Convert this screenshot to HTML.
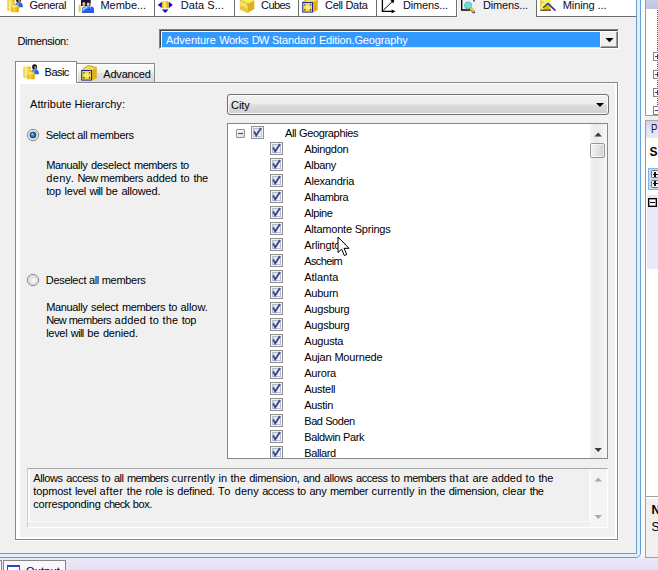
<!DOCTYPE html>
<html><head><meta charset="utf-8"><title>Dimension Data</title>
<style>
*{margin:0;padding:0;box-sizing:border-box}
html,body{width:658px;height:570px;overflow:hidden;background:#f0f0f0}
body{position:relative;font-family:"Liberation Sans",sans-serif;font-size:11px;color:#000;line-height:13px}
.a{position:absolute}
.t{position:absolute;white-space:nowrap;height:13px;line-height:13px}
.tab{position:absolute;top:0;height:17px;background:#fff;border-right:1px solid #6d6d6d;border-bottom:1px solid #6d6d6d}
.cb{position:absolute;width:13px;height:13px;border:1px solid #8e8f8f;background:#f4f4f4}
.cb i{position:absolute;left:1px;top:1px;width:9px;height:9px;border:1px solid #b8c0cc;background:linear-gradient(135deg,#d6dae0,#f6f6f6)}
.cb svg{position:absolute;left:0;top:0}
</style></head>
<body>
<div class="a" style="left:-10px;top:-10px;width:651px;height:568px;border:1px solid #669fd3;border-radius:0 0 5px 0;background:#e4eefa"></div>
<div class="a" style="left:-10px;top:-10px;width:647px;height:564px;border:1px solid #669fd3;background:#f0f0f0"></div>
<div class="a" style="left:641px;top:0;width:4px;height:556px;background:#fbfaf6"></div>
<div class="a" style="left:0;top:558px;width:658px;height:12px;background:linear-gradient(#e9e9f8,#e2e2f4)"></div>
<div class="a" style="left:0;top:0;width:636px;height:17px;background:#f0f0f0"></div>
<div class="tab" style="left:0px;width:75px"></div>
<div class="a" style="left:0px;top:0;width:75px;height:16px;overflow:hidden"><svg class="a" style="left:7px;top:-3px;overflow:visible" width="16" height="16" viewBox="0 0 16 16"><defs><linearGradient id="cy0" x1="0" x2="1"><stop offset="0" stop-color="#e9b80c"/><stop offset=".35" stop-color="#fff27a"/><stop offset="1" stop-color="#d9a300"/></linearGradient></defs><rect x="0.4" y="2.6" width="7.4" height="11.3" rx="1.5" fill="url(#cy0)"/><path d="M0.6 5.5h7M0.6 8h7M0.6 10.5h7" stroke="#fff8b0" stroke-width=".7" opacity=".7"/><ellipse cx="11.6" cy="3" rx="2.5" ry="2.7" fill="#15102e"/><ellipse cx="12.3" cy="3.6" rx="1.1" ry="1.5" fill="#b8a030"/><path d="M10.6 5 h2.6 v.8 h-2.6z" fill="#c8b040"/><path d="M7.8 10.3 q0 -5 4 -5 q4.2 0 4.2 5z" fill="#2a62ea"/><path d="M9.6 8.8 q.6 -2.4 2.6 -2.4" stroke="#8fd0ff" stroke-width="1" fill="none"/><rect x="4.2" y="7.8" width="7.6" height="7.4" rx="1.5" fill="url(#cy0)"/><rect x="4.2" y="10.5" width="7.6" height="4.7" rx="1.5" fill="#f0a000" opacity=".45"/><path d="M4.4 9.6h7.2" stroke="#fff8b0" stroke-width=".7" opacity=".8"/></svg></div>
<div class="t" style="letter-spacing:-0.377px;left:29.5px;top:-1px;color:#0a0a1e">General</div>
<div class="tab" style="left:75px;width:80px"></div>
<div class="a" style="left:75px;top:0;width:80px;height:16px;overflow:hidden"><svg class="a" style="left:3px;top:-3.2px;overflow:visible" width="16" height="16" viewBox="0 0 16 16"><ellipse cx="1.7" cy="11.4" rx="1.2" ry="4.2" fill="#d8c828" opacity=".85"/><path d="M3 9 V4.4 q0 -3.4 2.8 -3.4 q1.5 0 2.4 1 q1 -1 2.5 -.6 q2.4 .6 2 3.8 l-.5 3.8z" fill="#1a1030"/><ellipse cx="5.8" cy="7" rx="1.5" ry="1.9" fill="#e8b890"/><ellipse cx="10.2" cy="7.3" rx="1.4" ry="1.7" fill="#f0c8a0"/><path d="M4 16 v-3.4 q0 -3 3 -3 h6 q3 0 3 3.2 v3.2z" fill="#2c5ce4"/><path d="M5.2 13.6 q.4 -2.8 3 -2.8 h1.2" stroke="#9fe0f0" stroke-width="1.5" fill="none"/><path d="M11 10 l1.3 2.2 l1.1 -2.2" fill="#7a8cf0"/></svg></div>
<div class="t" style="letter-spacing:-0.045px;left:100.5px;top:-1px;color:#0a0a1e">Membe...</div>
<div class="tab" style="left:155px;width:80px"></div>
<div class="a" style="left:155px;top:0;width:80px;height:16px;overflow:hidden"><svg class="a" style="left:2px;top:-3px;overflow:visible" width="16" height="16" viewBox="0 0 16 16"><defs><linearGradient id="ds2" x1="0" x2="1"><stop offset="0" stop-color="#e0a800"/><stop offset=".4" stop-color="#fff080"/><stop offset="1" stop-color="#d89c00"/></linearGradient></defs><rect x="4.9" y="4" width="6.8" height="7.6" rx="1.6" fill="url(#ds2)"/><path d="M0.8 7.9 l4 -3.2 v6.4z M15.9 7.9 l-4 -3.2 v6.4z M8.2 15.9 l-3.4 -3.4 h6.8z M8.2 0 l-3 3 h6z" fill="#0a0ae6"/></svg></div>
<div class="t" style="letter-spacing:0.050px;left:180.75px;top:-1px;color:#0a0a1e">Data S...</div>
<div class="tab" style="left:235px;width:64px"></div>
<div class="a" style="left:235px;top:0;width:64px;height:16px;overflow:hidden"><svg class="a" style="left:3.5px;top:-3.2px;overflow:visible" width="16" height="16" viewBox="0 0 16 16"><path d="M0.8 3.2 L8.4 0 L15.3 3.2 L8.6 6.7z" fill="#f6ee5a"/><path d="M0.8 3.2 L8.6 6.7 V16 L0.8 12.4z" fill="#f3e16c"/><path d="M0.8 8 L8.6 11.5 V16 L0.8 12.4z" fill="#e9bf2a" opacity=".8"/><path d="M8.6 6.7 L15.3 3.2 V12 L8.6 16z" fill="#ddb01c"/><path d="M0.8 3.2 L8.6 6.7 L8.6 9" stroke="#c89a10" stroke-width=".7" fill="none"/></svg></div>
<div class="t" style="letter-spacing:-0.559px;left:261px;top:-1px;color:#0a0a1e">Cubes</div>
<div class="tab" style="left:299px;width:78px"></div>
<div class="a" style="left:299px;top:0;width:78px;height:16px;overflow:hidden"><svg class="a" style="left:2.8000000000000114px;top:-3.1px;overflow:visible" width="16" height="16" viewBox="0 0 16 16"><path d="M0.6 5 L7 0.2 L15.8 2.6 L11 5z" fill="#f3dc50"/><path d="M1 5 L7 0.4 L15.6 2.6" stroke="#c88a10" stroke-width=".8" fill="none"/><path d="M11 5 L15.8 2.6 V13 L11 15.4z" fill="#ddb01c"/><rect x="0.7" y="5.5" width="9.8" height="9.6" fill="#f4dc3c" stroke="#1c2a90" stroke-width="1"/><path d="M2.6 7.6 l6 5.6 M8.6 7.6 l-6 5.6" stroke="#f8f0a0" stroke-width="1.2"/><path d="M2.2 7.2h1.4v1.4h-1.4z M7.8 7.2h1.4v1.4h-1.4z M2.2 12h1.4v1.4h-1.4z M7.8 12h1.4v1.4h-1.4z" fill="#4a2a80"/></svg></div>
<div class="t" style="letter-spacing:-0.306px;left:325px;top:-1px;color:#0a0a1e">Cell Data</div>
<div class="tab" style="left:377px;width:80px"></div>
<div class="a" style="left:377px;top:0;width:80px;height:16px;overflow:hidden"><svg class="a" style="left:3px;top:0px;overflow:visible" width="16" height="16" viewBox="0 0 16 16"><path d="M2.4 -1 V11.3 H12" stroke="#000" stroke-width="1.3" fill="none"/><path d="M15.6 11.3 l-4 -1.9 v3.8z" fill="#000"/><path d="M3.4 10.2 L12.6 1.2" stroke="#000" stroke-width="1"/><path d="M14.4 -0.6 l-4 1 l3 3z" fill="#000"/></svg></div>
<div class="t" style="letter-spacing:-0.163px;left:403px;top:-1px;color:#0a0a1e">Dimens...</div>
<div class="a" style="left:457px;top:0;width:79px;height:17px;background:#f0f0f0;border-left:1px solid #fff"></div>
<div class="a" style="left:457px;top:0;width:79px;height:16px;overflow:hidden"><svg class="a" style="left:3px;top:0px;overflow:visible" width="16" height="16" viewBox="0 0 16 16"><path d="M1.7 -1 V10 H10" stroke="#000" stroke-width="1.3" fill="none"/><path d="M10.5 -0.5 l3.5 0 l0 2" stroke="#000" stroke-width="1.2" fill="none"/><circle cx="8.1" cy="5.5" r="3.6" fill="#38e6dc" stroke="#8aa0b0" stroke-width=".8"/><path d="M6.2 4.4h1v1h-1z M8.4 3.6h1v1h-1z M7.4 6.2h1v1h-1z M9.6 5.8h1v1h-1z" fill="#d8fffa"/><path d="M10.6 8.6 L13.8 12" stroke="#2a2460" stroke-width="2.6" stroke-linecap="round"/><path d="M10.5 8.2 L13.6 11.3" stroke="#e8d800" stroke-width="2.2" stroke-linecap="round"/></svg></div>
<div class="t" style="letter-spacing:-0.163px;left:483px;top:-1px;color:#0a0a1e">Dimens...</div>
<div class="tab" style="left:536px;width:100px;border-left:1px solid #6d6d6d;border-right:none"></div>
<div class="a" style="left:536px;top:0;width:100px;height:16px;overflow:hidden"><svg class="a" style="left:4px;top:0px;overflow:visible" width="16" height="16" viewBox="0 0 16 16"><rect x="0.4" y="-3" width="10.6" height="13.4" fill="#f8f27a"/><path d="M0.4 2.2h4 M0.9 -3v13" stroke="#d8b020" stroke-width=".8"/><path d="M2.6 10 L7.4 3.6 L11 10z" fill="#f2b000"/><path d="M0.4 10.2h10.6" stroke="#2a1a00" stroke-width="1"/><path d="M3.2 7.8 L7.8 3.2" stroke="#1e5a3a" stroke-width="1.4"/><path d="M7.6 3.2 L15.4 10.6" stroke="#2a3cb4" stroke-width="1.8"/></svg></div>
<div class="t" style="letter-spacing:-0.089px;left:562.75px;top:-1px;color:#0a0a1e">Mining ...</div>
<div class="t" id="dim" style="letter-spacing:-0.403px;left:17.5px;top:35px">Dimension:</div>
<div class="a" style="left:159px;top:29px;width:460px;height:20px;border:1px solid;border-color:#828282 #fff #fff #828282"></div>
<div class="a" style="left:160px;top:30px;width:458px;height:18px;border:1px solid;border-color:#404040 #e3e3e3 #e3e3e3 #404040;background:#fff"></div>
<div class="a" style="left:162px;top:32px;width:438px;height:15px;background:#3399ff"></div>
<div class="t" id="adv" style="left:166px;top:34px;color:#fff"><span style="position:absolute;left:0.00px;top:0;white-space:pre;letter-spacing:-0.040px">Adventure </span><span style="position:absolute;left:53.30px;top:0;white-space:pre;letter-spacing:-0.414px">Works </span><span style="position:absolute;left:85.70px;top:0;white-space:pre;letter-spacing:-0.700px">DW </span><span style="position:absolute;left:105.90px;top:0;white-space:pre;letter-spacing:-0.145px">Standard </span><span style="position:absolute;left:152.90px;top:0;white-space:pre;letter-spacing:-0.143px">Edition.Geography</span></div>
<div class="a" style="left:600px;top:31px;width:18px;height:17px;background:#f0f0f0;border:1px solid;border-color:#fff #696969 #696969 #fff;box-shadow:inset -1px -1px 0 #a0a0a0"></div>
<svg class="a" style="left:605px;top:38px" width="9" height="5" viewBox="0 0 9 5"><path d="M0.5 0h8L4.5 4.2z" fill="#000"/></svg>
<div class="a" style="left:15px;top:82px;width:604px;height:459px;border:1px solid #fff;border-left:none;border-top:none"></div>
<div class="a" style="left:15px;top:82px;width:603px;height:458px;border:1px solid #868686;background:#fff"></div>
<div class="a" style="left:20px;top:84px;width:595px;height:453px;background:#f0f0f0"></div>
<div class="a" style="left:76px;top:63px;width:79px;height:20px;border:1px solid #8c8c8c;border-bottom:1px solid #868686;background:linear-gradient(#fbfbfb,#f2f2f2 45%,#e2e2e2 55%,#dadada);box-shadow:inset 1px 1px 0 #fff"></div>
<div class="a" style="left:15px;top:61px;width:62px;height:21px;border:1px solid #868686;border-bottom:none;background:#fff"></div>
<div class="a" style="left:16px;top:82px;width:60px;height:2px;background:#fff"></div>
<svg class="a" style="left:23px;top:63.5px;overflow:visible" width="16" height="16" viewBox="0 0 16 16"><defs><linearGradient id="cy20" x1="0" x2="1"><stop offset="0" stop-color="#e9b80c"/><stop offset=".35" stop-color="#fff27a"/><stop offset="1" stop-color="#d9a300"/></linearGradient></defs><rect x="0.4" y="2.6" width="7.4" height="11.3" rx="1.5" fill="url(#cy20)"/><path d="M0.6 5.5h7M0.6 8h7M0.6 10.5h7" stroke="#fff8b0" stroke-width=".7" opacity=".7"/><ellipse cx="11.6" cy="3" rx="2.5" ry="2.7" fill="#15102e"/><ellipse cx="12.3" cy="3.6" rx="1.1" ry="1.5" fill="#b8a030"/><path d="M10.6 5 h2.6 v.8 h-2.6z" fill="#c8b040"/><path d="M7.8 10.3 q0 -5 4 -5 q4.2 0 4.2 5z" fill="#2a62ea"/><path d="M9.6 8.8 q.6 -2.4 2.6 -2.4" stroke="#8fd0ff" stroke-width="1" fill="none"/><rect x="4.2" y="7.8" width="7.6" height="7.4" rx="1.5" fill="url(#cy20)"/><rect x="4.2" y="10.5" width="7.6" height="4.7" rx="1.5" fill="#f0a000" opacity=".45"/><path d="M4.4 9.6h7.2" stroke="#fff8b0" stroke-width=".7" opacity=".8"/></svg>
<svg class="a" style="left:81px;top:65px;overflow:visible" width="16" height="16" viewBox="0 0 16 16"><path d="M0.6 5 L7 0.2 L15.8 2.6 L11 5z" fill="#f3dc50"/><path d="M1 5 L7 0.4 L15.6 2.6" stroke="#c88a10" stroke-width=".8" fill="none"/><path d="M11 5 L15.8 2.6 V13 L11 15.4z" fill="#ddb01c"/><rect x="0.7" y="5.5" width="9.8" height="9.6" fill="#f4dc3c" stroke="#1c2a90" stroke-width="1"/><path d="M2.6 7.6 l6 5.6 M8.6 7.6 l-6 5.6" stroke="#f8f0a0" stroke-width="1.2"/><path d="M2.2 7.2h1.4v1.4h-1.4z M7.8 7.2h1.4v1.4h-1.4z M2.2 12h1.4v1.4h-1.4z M7.8 12h1.4v1.4h-1.4z" fill="#4a2a80"/></svg>
<div class="t" style="letter-spacing:-0.541px;left:44.6px;top:66px">Basic</div>
<div class="t" style="letter-spacing:-0.180px;left:103.25px;top:68px">Advanced</div>
<div class="t" id="ah" style="letter-spacing:0.042px;left:30px;top:98px">Attribute Hierarchy:</div>
<div class="a" style="left:227px;top:94px;width:382px;height:21px;border:1px solid #707070;border-radius:3px;background:linear-gradient(#f2f2f2 0%,#ebebeb 48%,#dddddd 52%,#cfcfcf 100%);box-shadow:inset 0 0 0 1px #fafafa"></div>
<div class="t" style="letter-spacing:-0.051px;left:231px;top:99px">City</div>
<div class="a" style="left:595.5px;top:103px;width:0;height:0;border-left:4px solid transparent;border-right:4px solid transparent;border-top:4px solid #000"></div>
<svg class="a" style="left:26px;top:127.8px" width="14" height="14" viewBox="0 0 14 14"><circle cx="7" cy="7" r="5.7" fill="#f6f6f6" stroke="#8c8c8c" stroke-width="1"/><circle cx="7" cy="7" r="4.3" fill="#efefef" stroke="#c4c4c4" stroke-width=".8"/><circle cx="7" cy="7" r="3.3" fill="#1c4f8c"/><circle cx="6.8" cy="6.8" r="1.9" fill="#2f8fdc"/><circle cx="6.3" cy="6.2" r=".9" fill="#8fd4f8"/></svg>
<svg class="a" style="left:26px;top:272.8px" width="14" height="14" viewBox="0 0 14 14"><circle cx="7" cy="7" r="5.7" fill="#f6f6f6" stroke="#8c8c8c" stroke-width="1"/><circle cx="7" cy="7" r="4.3" fill="#efefef" stroke="#c4c4c4" stroke-width=".8"/><circle cx="7" cy="7" r="3" fill="#e2e2e2"/><circle cx="7.6" cy="7.6" r="2.4" fill="#f4f4f4"/></svg>
<div class="t" id="sam" style="letter-spacing:-0.308px;left:45.75px;top:128.5px">Select all members</div>
<div class="t" style="left:45.75px;top:158.5px"><span style="position:absolute;left:0.45px;top:0;white-space:pre;letter-spacing:-0.354px">Manually </span><span style="position:absolute;left:45.15px;top:0;white-space:pre;letter-spacing:-0.186px">deselect </span><span style="position:absolute;left:88.15px;top:0;white-space:pre;letter-spacing:-0.406px">members </span><span style="position:absolute;left:134.65px;top:0;white-space:pre;letter-spacing:-0.494px">to</span></div>
<div class="t" style="left:45.75px;top:171.5px"><span style="position:absolute;left:0.45px;top:0;white-space:pre;letter-spacing:0.361px">deny. </span><span style="position:absolute;left:31.85px;top:0;white-space:pre;letter-spacing:-0.700px">New </span><span style="position:absolute;left:54.45px;top:0;white-space:pre;letter-spacing:-0.421px">members </span><span style="position:absolute;left:100.85px;top:0;white-space:pre;letter-spacing:-0.059px">added </span><span style="position:absolute;left:134.65px;top:0;white-space:pre;letter-spacing:0.156px">to </span><span style="position:absolute;left:147.65px;top:0;white-space:pre;letter-spacing:-0.299px">the</span></div>
<div class="t" style="left:45.75px;top:184.5px"><span style="position:absolute;left:0.45px;top:0;white-space:pre;letter-spacing:-0.132px">top </span><span style="position:absolute;left:18.85px;top:0;white-space:pre;letter-spacing:-0.245px">level </span><span style="position:absolute;left:43.75px;top:0;white-space:pre;letter-spacing:-0.645px">will </span><span style="position:absolute;left:59.95px;top:0;white-space:pre;letter-spacing:-0.025px">be </span><span style="position:absolute;left:75.65px;top:0;white-space:pre;letter-spacing:-0.182px">allowed.</span></div>
<div class="t" style="letter-spacing:-0.301px;left:45.75px;top:273.5px">Deselect all members</div>
<div class="t" style="left:45.75px;top:300.5px"><span style="position:absolute;left:0.45px;top:0;white-space:pre;letter-spacing:-0.354px">Manually </span><span style="position:absolute;left:45.15px;top:0;white-space:pre;letter-spacing:-0.192px">select </span><span style="position:absolute;left:76.25px;top:0;white-space:pre;letter-spacing:-0.406px">members </span><span style="position:absolute;left:122.75px;top:0;white-space:pre;letter-spacing:-0.394px">to </span><span style="position:absolute;left:134.65px;top:0;white-space:pre;letter-spacing:-0.022px">allow.</span></div>
<div class="t" style="left:45.75px;top:313.5px"><span style="position:absolute;left:0.45px;top:0;white-space:pre;letter-spacing:-0.700px">New </span><span style="position:absolute;left:22.95px;top:0;white-space:pre;letter-spacing:-0.492px">members </span><span style="position:absolute;left:68.85px;top:0;white-space:pre;letter-spacing:0.181px">added </span><span style="position:absolute;left:103.85px;top:0;white-space:pre;letter-spacing:0.156px">to </span><span style="position:absolute;left:116.85px;top:0;white-space:pre;letter-spacing:0.134px">the </span><span style="position:absolute;left:136.05px;top:0;white-space:pre;letter-spacing:-0.332px">top</span></div>
<div class="t" style="left:45.75px;top:326.5px"><span style="position:absolute;left:0.45px;top:0;white-space:pre;letter-spacing:-0.305px">level </span><span style="position:absolute;left:25.05px;top:0;white-space:pre;letter-spacing:-0.595px">will </span><span style="position:absolute;left:41.45px;top:0;white-space:pre;letter-spacing:-0.025px">be </span><span style="position:absolute;left:57.15px;top:0;white-space:pre;letter-spacing:-0.142px">denied.</span></div>
<div class="a" style="left:227px;top:123px;width:381px;height:336px;background:#fff;border:1px solid #828790"></div>
<div class="a" style="left:236px;top:129px;width:9px;height:9px;border:1px solid #919191;background:linear-gradient(135deg,#fff,#d8d8d8);border-radius:1px"></div>
<div class="a" style="left:238px;top:133px;width:5px;height:1px;background:#3a3f8c"></div>
<div class="cb" style="left:251px;top:126px"><i></i><svg width="11" height="11" viewBox="0 0 11 11"><path d="M2.1 4.3 L4.2 8.4 L9 1.1" fill="none" stroke="#33429a" stroke-width="1.8"/></svg></div>
<div class="t" style="letter-spacing:-0.335px;left:285px;top:127px">All Geographies</div>
<div class="cb" style="left:270px;top:142px"><i></i><svg width="11" height="11" viewBox="0 0 11 11"><path d="M2.1 4.3 L4.2 8.4 L9 1.1" fill="none" stroke="#33429a" stroke-width="1.8"/></svg></div>
<div class="t" style="letter-spacing:-0.312px;left:304.25px;top:143px">Abingdon</div>
<div class="cb" style="left:270px;top:158px"><i></i><svg width="11" height="11" viewBox="0 0 11 11"><path d="M2.1 4.3 L4.2 8.4 L9 1.1" fill="none" stroke="#33429a" stroke-width="1.8"/></svg></div>
<div class="t" style="letter-spacing:-0.315px;left:304.25px;top:159px">Albany</div>
<div class="cb" style="left:270px;top:174px"><i></i><svg width="11" height="11" viewBox="0 0 11 11"><path d="M2.1 4.3 L4.2 8.4 L9 1.1" fill="none" stroke="#33429a" stroke-width="1.8"/></svg></div>
<div class="t" style="letter-spacing:-0.198px;left:304.25px;top:175px">Alexandria</div>
<div class="cb" style="left:270px;top:190px"><i></i><svg width="11" height="11" viewBox="0 0 11 11"><path d="M2.1 4.3 L4.2 8.4 L9 1.1" fill="none" stroke="#33429a" stroke-width="1.8"/></svg></div>
<div class="t" style="letter-spacing:-0.385px;left:304.25px;top:191px">Alhambra</div>
<div class="cb" style="left:270px;top:206px"><i></i><svg width="11" height="11" viewBox="0 0 11 11"><path d="M2.1 4.3 L4.2 8.4 L9 1.1" fill="none" stroke="#33429a" stroke-width="1.8"/></svg></div>
<div class="t" style="letter-spacing:-0.388px;left:304.25px;top:207px">Alpine</div>
<div class="cb" style="left:270px;top:222px"><i></i><svg width="11" height="11" viewBox="0 0 11 11"><path d="M2.1 4.3 L4.2 8.4 L9 1.1" fill="none" stroke="#33429a" stroke-width="1.8"/></svg></div>
<div class="t" style="letter-spacing:-0.214px;left:304.25px;top:223px">Altamonte Springs</div>
<div class="cb" style="left:270px;top:238px"><i></i><svg width="11" height="11" viewBox="0 0 11 11"><path d="M2.1 4.3 L4.2 8.4 L9 1.1" fill="none" stroke="#33429a" stroke-width="1.8"/></svg></div>
<div class="t" style="letter-spacing:-0.158px;left:304.25px;top:239px">Arlington</div>
<div class="cb" style="left:270px;top:254px"><i></i><svg width="11" height="11" viewBox="0 0 11 11"><path d="M2.1 4.3 L4.2 8.4 L9 1.1" fill="none" stroke="#33429a" stroke-width="1.8"/></svg></div>
<div class="t" style="letter-spacing:-0.634px;left:304.25px;top:255px">Ascheim</div>
<div class="cb" style="left:270px;top:270px"><i></i><svg width="11" height="11" viewBox="0 0 11 11"><path d="M2.1 4.3 L4.2 8.4 L9 1.1" fill="none" stroke="#33429a" stroke-width="1.8"/></svg></div>
<div class="t" style="letter-spacing:-0.036px;left:304.25px;top:271px">Atlanta</div>
<div class="cb" style="left:270px;top:286px"><i></i><svg width="11" height="11" viewBox="0 0 11 11"><path d="M2.1 4.3 L4.2 8.4 L9 1.1" fill="none" stroke="#33429a" stroke-width="1.8"/></svg></div>
<div class="t" style="letter-spacing:-0.247px;left:304.25px;top:287px">Auburn</div>
<div class="cb" style="left:270px;top:302px"><i></i><svg width="11" height="11" viewBox="0 0 11 11"><path d="M2.1 4.3 L4.2 8.4 L9 1.1" fill="none" stroke="#33429a" stroke-width="1.8"/></svg></div>
<div class="t" style="letter-spacing:-0.230px;left:304.25px;top:303px">Augsburg</div>
<div class="cb" style="left:270px;top:318px"><i></i><svg width="11" height="11" viewBox="0 0 11 11"><path d="M2.1 4.3 L4.2 8.4 L9 1.1" fill="none" stroke="#33429a" stroke-width="1.8"/></svg></div>
<div class="t" style="letter-spacing:-0.230px;left:304.25px;top:319px">Augsburg</div>
<div class="cb" style="left:270px;top:334px"><i></i><svg width="11" height="11" viewBox="0 0 11 11"><path d="M2.1 4.3 L4.2 8.4 L9 1.1" fill="none" stroke="#33429a" stroke-width="1.8"/></svg></div>
<div class="t" style="letter-spacing:-0.196px;left:304.25px;top:335px">Augusta</div>
<div class="cb" style="left:270px;top:350px"><i></i><svg width="11" height="11" viewBox="0 0 11 11"><path d="M2.1 4.3 L4.2 8.4 L9 1.1" fill="none" stroke="#33429a" stroke-width="1.8"/></svg></div>
<div class="t" style="letter-spacing:-0.177px;left:304.25px;top:351px">Aujan Mournede</div>
<div class="cb" style="left:270px;top:366px"><i></i><svg width="11" height="11" viewBox="0 0 11 11"><path d="M2.1 4.3 L4.2 8.4 L9 1.1" fill="none" stroke="#33429a" stroke-width="1.8"/></svg></div>
<div class="t" style="letter-spacing:-0.214px;left:304.25px;top:367px">Aurora</div>
<div class="cb" style="left:270px;top:382px"><i></i><svg width="11" height="11" viewBox="0 0 11 11"><path d="M2.1 4.3 L4.2 8.4 L9 1.1" fill="none" stroke="#33429a" stroke-width="1.8"/></svg></div>
<div class="t" style="letter-spacing:-0.290px;left:304.25px;top:383px">Austell</div>
<div class="cb" style="left:270px;top:398px"><i></i><svg width="11" height="11" viewBox="0 0 11 11"><path d="M2.1 4.3 L4.2 8.4 L9 1.1" fill="none" stroke="#33429a" stroke-width="1.8"/></svg></div>
<div class="t" style="letter-spacing:-0.305px;left:304.25px;top:399px">Austin</div>
<div class="cb" style="left:270px;top:414px"><i></i><svg width="11" height="11" viewBox="0 0 11 11"><path d="M2.1 4.3 L4.2 8.4 L9 1.1" fill="none" stroke="#33429a" stroke-width="1.8"/></svg></div>
<div class="t" style="letter-spacing:-0.438px;left:304.25px;top:415px">Bad Soden</div>
<div class="cb" style="left:270px;top:430px"><i></i><svg width="11" height="11" viewBox="0 0 11 11"><path d="M2.1 4.3 L4.2 8.4 L9 1.1" fill="none" stroke="#33429a" stroke-width="1.8"/></svg></div>
<div class="t" style="letter-spacing:-0.350px;left:304.25px;top:431px">Baldwin Park</div>
<div class="cb" style="left:270px;top:446px"><i></i><svg width="11" height="11" viewBox="0 0 11 11"><path d="M2.1 4.3 L4.2 8.4 L9 1.1" fill="none" stroke="#33429a" stroke-width="1.8"/></svg></div>
<div class="t" style="letter-spacing:-0.393px;left:304.25px;top:447px">Ballard</div>
<div class="a" style="left:228px;top:458px;width:379px;height:1px;background:#828790"></div>
<div class="a" style="left:227px;top:459px;width:381px;height:10px;background:#f0f0f0"></div>
<div class="a" style="left:590px;top:124px;width:17px;height:334px;background:linear-gradient(90deg,#f5f5f5,#ebebeb 30%,#efefef 70%,#f8f8f8)"></div>
<div class="a" style="left:590px;top:143px;width:15px;height:15px;border:1px solid #979797;border-radius:2px;background:linear-gradient(90deg,#f3f3f3,#e4e4e4 50%,#cfcfcf);box-shadow:inset 0 0 0 1px rgba(255,255,255,.6)"></div>
<svg class="a" style="left:594px;top:132px" width="9" height="5" viewBox="0 0 9 5"><path d="M0.5 4.4h7.4L4.2 0.4z" fill="#3a3a3a"/></svg>
<svg class="a" style="left:594px;top:448px" width="9" height="5" viewBox="0 0 9 5"><path d="M0.5 0h7.4L4.2 4z" fill="#3a3a3a"/></svg>
<svg class="a" style="left:336.5px;top:236px" width="14" height="21" viewBox="0 0 14 21"><path d="M1 1 L1 16.5 L4.6 13.2 L7.4 19.6 L9.8 18.5 L7 12.3 L12 12.3 Z" fill="#fff" stroke="#000" stroke-width="1"/></svg>
<div class="a" style="left:27px;top:468px;width:581px;height:60px;border:1px solid;border-color:#a6a6a6 #fff #fff #cdcdcd;background:#f0f0f0"></div>
<div class="a" style="left:28px;top:469px;width:562px;height:53px;border:1px solid #fafafa;border-left:2px solid #fafafa;border-top-color:#f0f0f0"></div>
<div class="a" style="left:590px;top:469px;width:17px;height:58px;background:#f4f4f4;border-left:1px solid #fafafa"></div>
<svg class="a" style="left:594px;top:477px" width="9" height="5" viewBox="0 0 9 5"><path d="M0.5 4.4h7.4L4.2 0.4z" fill="#a8a8a8"/></svg>
<svg class="a" style="left:594px;top:515px" width="9" height="5" viewBox="0 0 9 5"><path d="M0.5 0h7.4L4.2 4z" fill="#a8a8a8"/></svg>
<div class="t" id="d1" style="left:33px;top:471.6px"><span style="position:absolute;left:0.30px;top:0;white-space:pre;letter-spacing:-0.399px">Allows </span><span style="position:absolute;left:33.20px;top:0;white-space:pre;letter-spacing:-0.392px">access </span><span style="position:absolute;left:68.60px;top:0;white-space:pre;letter-spacing:-0.144px">to </span><span style="position:absolute;left:81.00px;top:0;white-space:pre;letter-spacing:-0.505px">all </span><span style="position:absolute;left:94.00px;top:0;white-space:pre;letter-spacing:-0.678px">members </span><span style="position:absolute;left:138.60px;top:0;white-space:pre;letter-spacing:0.146px">currently </span><span style="position:absolute;left:185.60px;top:0;white-space:pre;letter-spacing:-0.031px">in </span><span style="position:absolute;left:197.60px;top:0;white-space:pre;letter-spacing:-0.032px">the </span><span style="position:absolute;left:216.30px;top:0;white-space:pre;letter-spacing:-0.300px">dimension, </span><span style="position:absolute;left:270.00px;top:0;white-space:pre;letter-spacing:-0.386px">and </span><span style="position:absolute;left:290.70px;top:0;white-space:pre;letter-spacing:-0.280px">allows </span><span style="position:absolute;left:323.10px;top:0;white-space:pre;letter-spacing:-0.475px">access </span><span style="position:absolute;left:358.00px;top:0;white-space:pre;letter-spacing:-0.094px">to </span><span style="position:absolute;left:370.50px;top:0;white-space:pre;letter-spacing:-0.521px">members </span><span style="position:absolute;left:416.20px;top:0;white-space:pre;letter-spacing:0.335px">that </span><span style="position:absolute;left:439.40px;top:0;white-space:pre;letter-spacing:-0.069px">are </span><span style="position:absolute;left:458.60px;top:0;white-space:pre;letter-spacing:-0.039px">added </span><span style="position:absolute;left:492.50px;top:0;white-space:pre;letter-spacing:0.156px">to </span><span style="position:absolute;left:505.50px;top:0;white-space:pre;letter-spacing:-0.199px">the</span></div>
<div class="t" id="d2" style="left:33px;top:484.6px"><span style="position:absolute;left:0.30px;top:0;white-space:pre;letter-spacing:-0.149px">topmost </span><span style="position:absolute;left:41.90px;top:0;white-space:pre;letter-spacing:-0.285px">level </span><span style="position:absolute;left:66.60px;top:0;white-space:pre;letter-spacing:0.337px">after </span><span style="position:absolute;left:93.80px;top:0;white-space:pre;letter-spacing:-0.132px">the </span><span style="position:absolute;left:112.20px;top:0;white-space:pre;letter-spacing:-0.186px">role </span><span style="position:absolute;left:133.30px;top:0;white-space:pre;letter-spacing:-0.227px">is </span><span style="position:absolute;left:144.30px;top:0;white-space:pre;letter-spacing:-0.232px">defined. </span><span style="position:absolute;left:185.10px;top:0;white-space:pre;letter-spacing:0.600px">To </span><span style="position:absolute;left:201.80px;top:0;white-space:pre;letter-spacing:0.010px">deny </span><span style="position:absolute;left:229.20px;top:0;white-space:pre;letter-spacing:-0.458px">access </span><span style="position:absolute;left:264.20px;top:0;white-space:pre;letter-spacing:-0.194px">to </span><span style="position:absolute;left:276.50px;top:0;white-space:pre;letter-spacing:-0.250px">any </span><span style="position:absolute;left:297.00px;top:0;white-space:pre;letter-spacing:-0.374px">member </span><span style="position:absolute;left:338.60px;top:0;white-space:pre;letter-spacing:0.079px">currently </span><span style="position:absolute;left:385.00px;top:0;white-space:pre;letter-spacing:0.119px">in </span><span style="position:absolute;left:397.30px;top:0;white-space:pre;letter-spacing:-0.099px">the </span><span style="position:absolute;left:415.80px;top:0;white-space:pre;letter-spacing:-0.320px">dimension, </span><span style="position:absolute;left:469.30px;top:0;white-space:pre;letter-spacing:0.031px">clear </span><span style="position:absolute;left:496.80px;top:0;white-space:pre;letter-spacing:-0.566px">the</span></div>
<div class="t" id="d3" style="left:33px;top:497.6px"><span style="position:absolute;left:0.30px;top:0;white-space:pre;letter-spacing:-0.186px">corresponding </span><span style="position:absolute;left:71.10px;top:0;white-space:pre;letter-spacing:-0.700px">check </span><span style="position:absolute;left:99.70px;top:0;white-space:pre;letter-spacing:-0.374px">box.</span></div>
<div class="a" style="left:3px;top:560px;width:63px;height:12px;border:1px solid #868686;background:#f7f7fc"></div>
<div class="a" style="left:7px;top:565px;width:13px;height:8px;border:1px solid #2a4fb0;border-top:2px solid #1f48c8;background:#fff"></div>
<div class="t" style="letter-spacing:0.161px;left:26px;top:564.6px">Output</div>
<div class="a" style="left:-2px;top:560px;width:4px;height:12px;border:1px solid #868686;background:#f7f7fc"></div>
<div class="a" style="left:645px;top:0;width:13px;height:116px;background:#fff;border-left:1px solid #a39a92;border-bottom:1px solid #a0a0a0"></div>
<div class="a" style="left:646px;top:0;width:12px;height:9px;background:linear-gradient(#c9d0e6,#bcc6df)"></div>
<div class="a" style="left:657px;top:10px;width:1px;height:105px;background:repeating-linear-gradient(#555 0 1px,#fff 1px 2px)"></div>
<div class="a" style="left:653px;top:52px;width:9px;height:9px;border:1px solid #848484;background:#fff"></div><div class="a" style="left:655px;top:56px;width:5px;height:1px;background:#2a3f9c"></div>
<div class="a" style="left:657px;top:54px;width:1px;height:5px;background:#2a3f9c"></div>
<div class="a" style="left:653px;top:70px;width:9px;height:9px;border:1px solid #848484;background:#fff"></div><div class="a" style="left:655px;top:74px;width:5px;height:1px;background:#2a3f9c"></div>
<div class="a" style="left:657px;top:72px;width:1px;height:5px;background:#2a3f9c"></div>
<div class="a" style="left:653px;top:88px;width:9px;height:9px;border:1px solid #848484;background:#fff"></div><div class="a" style="left:655px;top:92px;width:5px;height:1px;background:#2a3f9c"></div>
<div class="a" style="left:657px;top:90px;width:1px;height:5px;background:#2a3f9c"></div>
<div class="a" style="left:653px;top:106px;width:9px;height:9px;border:1px solid #848484;background:#fff"></div><div class="a" style="left:655px;top:110px;width:5px;height:1px;background:#2a3f9c"></div>
<div class="a" style="left:645px;top:120px;width:13px;height:377px;background:#fff;border-left:1px solid #a39a92"></div>
<div class="a" style="left:646px;top:120px;width:12px;height:18px;background:linear-gradient(#ccd0ea,#dfe2f4 40%,#e6e8f6);border-top:1px solid #b0a8a8"></div>
<div class="t" style="left:651px;top:122.5px;font-size:12px;color:#223;transform:scale(.8,1.04);transform-origin:0 0">P</div>
<div class="t" style="left:649.5px;top:146px;font-size:12px;font-weight:bold;letter-spacing:-.3px">S</div>
<div class="a" style="left:648px;top:168px;width:10px;height:22px;background:#c1dbf6;border:1px solid #84b3e6;border-right:none"></div>
<div class="a" style="left:650.5px;top:170px;width:8px;height:8px;border:1px solid #707070;background:#f4f4f4;border-radius:1.5px"></div><div class="a" style="left:652.5px;top:173.5px;width:5px;height:1.4px;background:#111"></div><div class="a" style="left:654.3px;top:171.7px;width:1.4px;height:5px;background:#111"></div>
<div class="a" style="left:650.5px;top:179.5px;width:8px;height:8px;border:1px solid #707070;background:#f4f4f4;border-radius:1.5px"></div><div class="a" style="left:652.5px;top:183.0px;width:5px;height:1.4px;background:#111"></div><div class="a" style="left:654.3px;top:181.2px;width:1.4px;height:5px;background:#111"></div>
<div class="a" style="left:647px;top:195px;width:11px;height:74px;background:#e9e9fb"></div>
<div class="a" style="left:648px;top:198px;width:9px;height:9px;border:1px solid #000;background:#fff;box-shadow:inset 0 0 0 .5px #444"></div><div class="a" style="left:650px;top:202px;width:5px;height:1px;background:#000"></div>
<div class="a" style="left:645px;top:496px;width:13px;height:62px;background:#f0f0f0;border:1px solid #a0a0a0;border-right:none"></div>
<div class="a" style="left:646px;top:497px;width:12px;height:2px;background:#fff"></div>
<div class="t" style="left:651.5px;top:503.5px;font-weight:bold;font-size:12px">N</div>
<div class="t" style="left:651.5px;top:520.5px;font-size:12px">S</div>
</body></html>
